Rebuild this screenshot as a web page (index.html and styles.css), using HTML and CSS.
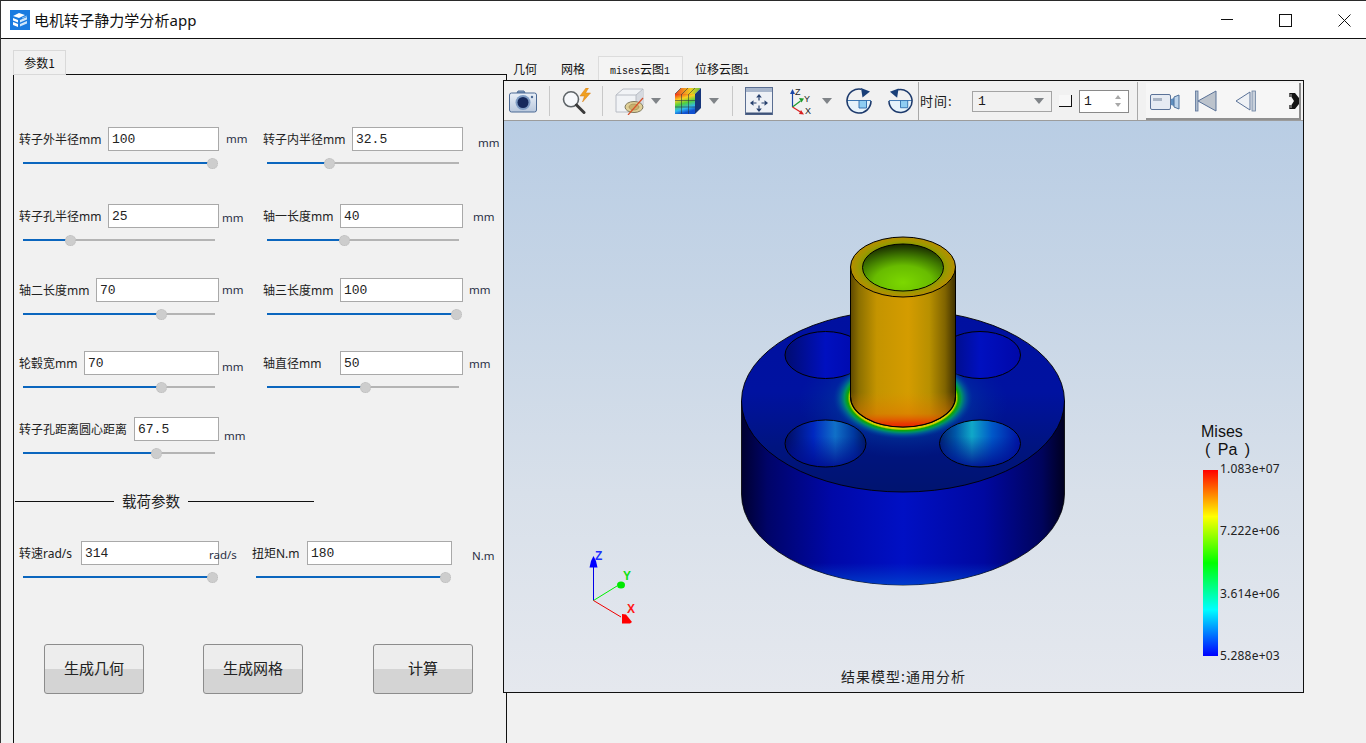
FILE: index.html
```html
<!DOCTYPE html>
<html lang="zh-CN">
<head>
<meta charset="utf-8">
<title>电机转子静力学分析app</title>
<link rel="stylesheet" href="styles.css">
</head>
<body>
<div class="window">
  <header class="titlebar">
    <svg class="logo" width="20" height="20" viewBox="0 0 20 20">
      <rect width="20" height="20" fill="#1a7be0"/>
      <path d="M3 6l6-3 6 2-6 3z M3 8l5 2v2.500l-5-2z M3 12l5 2v3l-5-2z" fill="#fff"/>
      <path d="M10 10l7-3v2.500l-7 3z M10 14l7-3v2.500l-7 3z" fill="#cfe6fb"/>
      <path d="M12 7.500l5-2v1l-5 2z" fill="#8fc4f5"/>
    </svg>
    <span class="app-title">电机转子静力学分析app</span>
    <div class="win-controls">
      <svg width="14" height="14" viewBox="0 0 14 14"><path d="M1 6.500h12" stroke="#111" fill="none"/></svg>
      <svg class="ml-44" width="14" height="14" viewBox="0 0 14 14"><rect x="1.500" y="1.500" width="12" height="12" stroke="#111" fill="none"/></svg>
      <svg class="ml-45" width="14" height="14" viewBox="0 0 14 14"><path d="M1.500 1.500l12 12M13.500 1.500l-12 12" stroke="#111" fill="none"/></svg>
    </div>
  </header>

  <main class="workspace">
    <section class="params">
      <div class="tabstrip"><div class="tab tab-param">参数1</div></div>
      <div class="pane">
        <div class="row">
          <div class="field">
            <div class="line"><div class="entry"><span class="label l-89">转子外半径mm</span><div class="input">100</div></div><span class="unit ux-7">mm</span></div>
            <div class="slider"><i style="width:98.4%"></i><b style="left:98.4%"></b></div>
          </div>
          <div class="field">
            <div class="line"><div class="entry"><span class="label l-89">转子内半径mm</span><div class="input">32.5</div></div><span class="unit ux-15 uy-4">mm</span></div>
            <div class="slider"><i style="width:32.3%"></i><b style="left:32.3%"></b></div>
          </div>
        </div>
        <div class="row gap-35">
          <div class="field">
            <div class="line"><div class="entry"><span class="label l-89">转子孔半径mm</span><div class="input">25</div></div><span class="unit ux-3 uy-2">mm</span></div>
            <div class="slider"><i style="width:24.5%"></i><b style="left:24.5%"></b></div>
          </div>
          <div class="field">
            <div class="line"><div class="entry"><span class="label l-77">轴一长度mm</span><div class="input">40</div></div><span class="unit ux-10 uy-1">mm</span></div>
            <div class="slider"><i style="width:40.1%"></i><b style="left:40.1%"></b></div>
          </div>
        </div>
        <div class="row gap-32">
          <div class="field">
            <div class="line"><div class="entry"><span class="label l-77">轴二长度mm</span><div class="input">70</div></div><span class="unit ux-3">mm</span></div>
            <div class="slider"><i style="width:71.9%"></i><b style="left:71.9%"></b></div>
          </div>
          <div class="field">
            <div class="line"><div class="entry"><span class="label l-77">轴三长度mm</span><div class="input">100</div></div><span class="unit ux-6">mm</span></div>
            <div class="slider"><i style="width:98.4%"></i><b style="left:98.4%"></b></div>
          </div>
        </div>
        <div class="row gap-31">
          <div class="field">
            <div class="line"><div class="entry"><span class="label l-65">轮毂宽mm</span><div class="input">70</div></div><span class="unit ux-3 uy-4">mm</span></div>
            <div class="slider"><i style="width:71.9%"></i><b style="left:71.9%"></b></div>
          </div>
          <div class="field">
            <div class="line"><div class="entry"><span class="label l-77">轴直径mm</span><div class="input">50</div></div><span class="unit ux-6 uy-1">mm</span></div>
            <div class="slider"><i style="width:51%"></i><b style="left:51%"></b></div>
          </div>
        </div>
        <div class="row gap-24">
          <div class="field">
            <div class="line"><div class="entry"><span class="label l-115">转子孔距离圆心距离</span><div class="input">67.5</div></div><span class="unit ux-5 uy-7">mm</span></div>
            <div class="slider"><i style="width:69.3%"></i><b style="left:69.3%"></b></div>
          </div>
        </div>

        <div class="divider"><span class="rule rule-short"></span><span class="divider-text">载荷参数</span><span class="rule"></span></div>

        <div class="row row-load">
          <div class="field">
            <div class="line"><div class="entry"><span class="label l-62">转速rad/s</span><div class="input">314</div></div><span class="unit ux-n10 uy-2">rad/s</span></div>
            <div class="slider"><i style="width:98.4%"></i><b style="left:98.4%"></b></div>
          </div>
          <div class="field">
            <div class="line"><div class="entry"><span class="label l-55">扭矩N.m</span><div class="input">180</div></div><span class="unit ux-20 uy-3">N.m</span></div>
            <div class="slider"><i style="width:98.4%"></i><b style="left:98.4%"></b></div>
          </div>
        </div>

        <div class="actions">
          <button class="btn">生成几何</button>
          <button class="btn ml-59">生成网格</button>
          <button class="btn ml-70">计算</button>
        </div>
      </div>
    </section>

    <section class="results">
      <div class="tabstrip result-tabs">
        <div class="tab">几何</div>
        <div class="tab">网格</div>
        <div class="tab tab-active"><span class="mono">mises</span>云图<span class="mono">1</span></div>
        <div class="tab">位移云图<span class="mono">1</span></div>
      </div>
      <div class="viewer">
        <div class="toolbar">
          <svg class="ml-5" width="28" height="24" viewBox="0 0 28 24">
            <defs><linearGradient id="camBody" x1="0" y1="0" x2="0" y2="1"><stop offset="0" stop-color="#eaf0f8"/><stop offset="1" stop-color="#b9c8dd"/></linearGradient></defs>
            <path d="M8 4l1-2h6l1 2z" fill="#8ea6c6" stroke="#4d6a95"/>
            <rect x=".5" y="4" width="27" height="19" rx="2" fill="url(#camBody)" stroke="#4d6a95"/>
            <circle cx="14" cy="13.500" r="7.500" fill="#7f9cc4"/>
            <circle cx="14" cy="13.500" r="5.500" fill="#16295c"/>
            <circle cx="23" cy="8" r="1.200" fill="#4d6a95"/>
          </svg>
          <span class="sep ml-12"></span>
          <svg class="ml-12" width="29" height="26" viewBox="0 0 29 26">
            <circle cx="9" cy="11.300" r="7.500" fill="#f6f8fb" stroke="#5e6468" stroke-width="1.600"/>
            <path d="M14.500 17l7.500 7.500" stroke="#3a3a3a" stroke-width="3" stroke-linecap="round"/>
            <path d="M24 0l-6 8h4.500l-2 6 8-9h-5l3-5z" fill="#f0a020" stroke="#d67a10" stroke-width=".5"/>
          </svg>
          <span class="sep ml-11"></span>
          <svg class="ml-12" width="29" height="28" viewBox="0 0 29 28">
            <path d="M1 8l7-6h20v16l-7 7H1z" fill="#f1f3f6" stroke="#b8bcc4"/>
            <path d="M21 8l7-6v16l-7 7z" fill="#d6dae0"/>
            <path d="M1 8h20v17M21 8l7-6" fill="none" stroke="#b8bcc4"/>
            <ellipse cx="19" cy="20" rx="9" ry="5.500" fill="#e0d098" stroke="#807a60"/>
            <ellipse cx="19" cy="20" rx="5" ry="3" fill="#c9b06c" stroke="#9a8650" stroke-width=".6"/>
            <path d="M13 28L28 11" stroke="#d8502a" stroke-width="1.200"/>
          </svg>
          <svg class="ml-7" width="10" height="6" viewBox="0 0 10 6"><path d="M0 0h10L5 6z" fill="#808488"/></svg>
          <svg class="ml-13" width="28" height="28" viewBox="0 0 28 28">
            <defs>
              <linearGradient id="cubeFace" x1="0" y1="0" x2=".3" y2="1"><stop offset="0" stop-color="#f02818"/><stop offset=".3" stop-color="#f8d020"/><stop offset=".55" stop-color="#50d040"/><stop offset=".8" stop-color="#30b8f0"/><stop offset="1" stop-color="#1050d0"/></linearGradient>
              <linearGradient id="cubeTop" x1="0" y1="0" x2="1" y2="0"><stop offset="0" stop-color="#f04020"/><stop offset=".6" stop-color="#f0d020"/><stop offset="1" stop-color="#60c040"/></linearGradient>
            </defs>
            <path d="M1 7l6-6h20l-6 6z" fill="url(#cubeTop)"/>
            <path d="M21 7l6-6v20l-6 6z" fill="#16367a"/>
            <rect x="1" y="7" width="20" height="20" fill="url(#cubeFace)"/>
            <path d="M7.500 7v20M14.500 7v20M1 13.500h20M1 20h20M7 1L1 7M14 1L8 7M21 1l-6 6" stroke="#2a3a40" stroke-width=".6" fill="none"/>
          </svg>
          <svg class="ml-7" width="10" height="6" viewBox="0 0 10 6"><path d="M0 0h10L5 6z" fill="#808488"/></svg>
          <span class="sep ml-13"></span>
          <svg class="ml-12" width="28" height="28" viewBox="0 0 28 28">
            <rect x=".5" y=".5" width="27" height="27" fill="#eef1f6" stroke="#5a6e92"/>
            <rect x="1" y="1" width="26" height="4" fill="#a8b6cc"/>
            <path d="M1 26.500h26" stroke="#3e5278" stroke-width="2"/>
            <g fill="#26406e"><path d="M14 7l2.800 3.500h-5.600z"/><path d="M14 25l2.800-3.500h-5.600z"/><path d="M5 16l3.500-2.800v5.600z"/><path d="M23 16l-3.500-2.800v5.600z"/></g>
            <path d="M14 10.500v3M14 18.500v3M8.500 16h3M16.500 16h3" stroke="#26406e" stroke-width="1.200"/>
          </svg>
          <svg class="ml-17" width="23" height="28" viewBox="0 0 23 28">
            <path d="M2.500 20V6" stroke="#1a46a8" stroke-width="1.200"/><path d="M2.500 2L5 7H0z" fill="#1a46a8"/>
            <path d="M2.500 20l8-6" stroke="#1c9a2c" stroke-width="1.200"/><path d="M14 11.500l-5-.5 2.500 4.500z" fill="#1c9a2c"/>
            <path d="M2.500 20l8 5" stroke="#d82020" stroke-width="1.200"/><path d="M14 27.500l-5-.5 2-4z" fill="#d82020"/>
            <text x="5" y="8" class="axis-mini">Z</text><text x="14" y="15" class="axis-mini">Y</text><text x="15" y="27" class="axis-mini">X</text>
          </svg>
          <svg class="ml-9" width="10" height="6" viewBox="0 0 10 6"><path d="M0 0h10L5 6z" fill="#808488"/></svg>
          <svg class="ml-14" width="26" height="26" viewBox="0 0 26 26">
            <path d="M1 12.500h24A12 12 0 0 1 1 12.500z" fill="#e6f3fb"/>
            <path d="M13 12.500h7.500V20H13z" fill="#8fcdf2"/>
            <path d="M1 12.500h24M13 12.500V20h7.500v-7.500" stroke="#2a6aaa" fill="none" stroke-width=".9"/>
            <path d="M25 13A12 12 0 1 1 15.500 1.300" fill="none" stroke="#1d3a6c" stroke-width="1.600"/>
            <path d="M15 0l9 3.500-7.500 6z" fill="#1a3f78"/>
          </svg>
          <svg class="ml-16" width="25" height="26" viewBox="0 0 26 26">
            <path d="M1 12.500h24A12 12 0 0 1 1 12.500z" fill="#e6f3fb"/>
            <path d="M13 12.500h7.500V20H13z" fill="#8fcdf2"/>
            <path d="M1 12.500h24M13 12.500V20h7.500v-7.500" stroke="#2a6aaa" fill="none" stroke-width=".9"/>
            <path d="M1 13A12 12 0 1 0 10.500 1.300" fill="none" stroke="#1d3a6c" stroke-width="1.600"/>
            <path d="M11 0L2 3.500l7.500 6z" fill="#1a3f78"/>
          </svg>
          <span class="sep sep-full ml-5"></span>
          <span class="time-label ml-1">时间:</span>
          <div class="combo ml-14"><span>1</span><svg width="10" height="6" viewBox="0 0 10 6"><path d="M0 0h10L5 6z" fill="#808488"/></svg></div>
          <span class="corner ml-7"></span>
          <div class="spin ml-7"><span>1</span><svg width="8" height="14" viewBox="0 0 8 14"><path d="M1 5l3-4 3 4zM1 9h6l-3 4z" fill="#a8a8a8"/></svg></div>
          <span class="sep sep-full ml-8"></span>
          <div class="player ml-8">
            <svg class="ml-4" width="30" height="20" viewBox="0 0 30 20">
              <rect x=".5" y="3.500" width="20" height="15" rx="1.500" fill="#e6ebf3" stroke="#5a7298"/>
              <rect x="3" y="7" width="9" height="3" fill="#a9b4c4"/>
              <path d="M21 8l3-1v8l-3-1z" fill="#5f8fc0"/>
              <path d="M24 6l5-2v14l-5-2z" fill="#bcd3ea" stroke="#4c6f99"/>
            </svg>
            <svg class="ml-15" width="22" height="22" viewBox="0 0 22 22">
              <path d="M3 11L21 1v20z" fill="#bcc3cc" stroke="#5a7298"/>
              <rect x=".5" y="1" width="2.500" height="20" fill="#aebccc" stroke="#5a7298" stroke-width=".8"/>
            </svg>
            <svg class="ml-18" width="23" height="22" viewBox="0 0 23 22">
              <path d="M1 11L15 2v18z" fill="#eef1f5" stroke="#5a7298"/>
              <rect x="17" y="1" width="3.500" height="20" fill="#c8d0da" stroke="#6a80a0" stroke-width=".8"/>
            </svg>
            <svg class="ml-30" width="12" height="20" viewBox="0 0 12 20">
              <path d="M1 2h6l4 5v6l-4 5H1l5-8z" fill="#141414"/>
              <path d="M1 3h3v3H1zM1 14h3v3H1z" fill="#666"/>
            </svg>
          </div>
        </div>

        <div class="view">
          <svg class="scene" width="798" height="570" viewBox="504 121 798 570">
            <defs>
              <linearGradient id="side" x1="0" y1="0" x2="1" y2="0">
                <stop offset="0" stop-color="#000030"/><stop offset=".08" stop-color="#000468"/><stop offset=".28" stop-color="#0008a8"/><stop offset=".5" stop-color="#0010c4"/><stop offset=".75" stop-color="#0008a0"/><stop offset=".93" stop-color="#00045c"/><stop offset="1" stop-color="#000020"/>
              </linearGradient>
              <linearGradient id="sideEdge" x1="0" y1="0" x2="0" y2="1">
                <stop offset=".88" stop-color="#0040c8" stop-opacity="0"/><stop offset="1" stop-color="#0048d0" stop-opacity=".8"/>
              </linearGradient>
              <linearGradient id="topFace" x1="0" y1="0" x2="0" y2="1">
                <stop offset="0" stop-color="#0010a0"/><stop offset=".45" stop-color="#0012a0"/><stop offset=".75" stop-color="#001480"/><stop offset="1" stop-color="#001470"/>
              </linearGradient>
              <radialGradient id="glow">
                <stop offset=".76" stop-color="#d8d000"/><stop offset=".79" stop-color="#10a800"/><stop offset=".84" stop-color="#009068"/><stop offset=".9" stop-color="#006098" stop-opacity=".75"/><stop offset="1" stop-color="#0030a0" stop-opacity="0"/>
              </radialGradient>
              <radialGradient id="glowWide">
                <stop offset=".45" stop-color="#005aa0" stop-opacity=".55"/><stop offset="1" stop-color="#0030a0" stop-opacity="0"/>
              </radialGradient>
              <linearGradient id="shaft" x1="0" y1="0" x2="1" y2="0">
                <stop offset="0" stop-color="#5e4800"/><stop offset=".08" stop-color="#8c7000"/><stop offset=".25" stop-color="#c49400"/><stop offset=".55" stop-color="#d49c00"/><stop offset=".75" stop-color="#b89000"/><stop offset=".9" stop-color="#806400"/><stop offset="1" stop-color="#3e3000"/>
              </linearGradient>
              <linearGradient id="shaftBase" gradientUnits="userSpaceOnUse" x1="0" y1="392" x2="0" y2="428">
                <stop offset="0" stop-color="#e08000" stop-opacity="0"/><stop offset=".6" stop-color="#e07000" stop-opacity=".5"/><stop offset=".88" stop-color="#e83800"/><stop offset="1" stop-color="#e82000"/>
              </linearGradient>
              <radialGradient id="bore" cx=".5" cy=".82" r=".8">
                <stop offset="0" stop-color="#7cd800"/><stop offset=".45" stop-color="#68bc00"/><stop offset=".72" stop-color="#3f7800"/><stop offset="1" stop-color="#1a2c00"/>
              </radialGradient>
              <radialGradient id="ring">
                <stop offset=".72" stop-color="#7c9c00"/><stop offset=".86" stop-color="#a09800"/><stop offset="1" stop-color="#b88c00"/>
              </radialGradient>
              <linearGradient id="holeBack" x1="0" y1="0" x2="1" y2="0">
                <stop offset="0" stop-color="#000c70"/><stop offset=".5" stop-color="#0010c0"/><stop offset="1" stop-color="#0008a8"/>
              </linearGradient>
              <linearGradient id="holeL" x1="0" y1="0" x2="1" y2="0">
                <stop offset="0" stop-color="#000c60"/><stop offset=".35" stop-color="#0028c0"/><stop offset=".62" stop-color="#1070c8"/><stop offset=".85" stop-color="#0038a0"/><stop offset="1" stop-color="#001860"/>
              </linearGradient>
              <linearGradient id="holeR" x1="0" y1="0" x2="1" y2="0">
                <stop offset="0" stop-color="#002070"/><stop offset=".2" stop-color="#0058a8"/><stop offset=".4" stop-color="#10a8c8"/><stop offset=".65" stop-color="#0058c8"/><stop offset="1" stop-color="#0010a0"/>
              </linearGradient>
              <linearGradient id="holeFade" x1="0" y1="0" x2="0" y2="1">
                <stop offset=".35" stop-color="#000c90" stop-opacity="0"/><stop offset="1" stop-color="#000c90" stop-opacity=".9"/>
              </linearGradient>
              <clipPath id="discTop"><ellipse cx="903" cy="401" rx="161.500" ry="91"/></clipPath>
            </defs>

            <path d="M741.500 401V494A161.500 91 0 0 0 1064.500 494V401Z" fill="url(#side)" stroke="#000" stroke-width=".8"/>
            <path d="M741.500 401V494A161.500 91 0 0 0 1064.500 494V401Z" fill="url(#sideEdge)"/>
            <ellipse cx="903" cy="401" rx="161.500" ry="91" fill="url(#topFace)" stroke="#000" stroke-width=".9"/>
            <ellipse cx="903" cy="402" rx="105" ry="56" fill="url(#glowWide)" clip-path="url(#discTop)"/>

            <ellipse cx="825.500" cy="355" rx="40.500" ry="23.500" fill="url(#holeBack)" stroke="#000"/>
            <ellipse cx="980" cy="355" rx="40.500" ry="23.500" fill="url(#holeBack)" stroke="#000"/>
            <ellipse cx="825.500" cy="443.500" rx="40.500" ry="23.500" fill="url(#holeL)"/>
            <ellipse cx="825.500" cy="443.500" rx="40.500" ry="23.500" fill="url(#holeFade)" stroke="#000"/>
            <ellipse cx="980" cy="443.500" rx="40.500" ry="23.500" fill="url(#holeR)"/>
            <ellipse cx="980" cy="443.500" rx="40.500" ry="23.500" fill="url(#holeFade)" stroke="#000"/>

            <ellipse cx="903" cy="398" rx="70" ry="41" fill="url(#glow)"/>

            <path d="M850.500 267V397A52.500 30 0 0 0 955.500 397V267Z" fill="url(#shaft)" stroke="#000"/>
            <path d="M851 380V397A52 30 0 0 0 955 397V380Z" fill="url(#shaftBase)"/>
            <path d="M850.500 397A52.500 30 0 0 0 955.500 397" fill="none" stroke="#000" stroke-width="1.200"/>
            <ellipse cx="903" cy="267" rx="52.500" ry="30" fill="url(#ring)" stroke="#000"/>
            <ellipse cx="903" cy="267.500" rx="40.500" ry="23.500" fill="url(#bore)" stroke="#000"/>

            <g class="triad">
              <path d="M593.500 600.500V566" stroke="#0000e8" stroke-width="1"/>
              <path d="M593.500 556l2.500 5 1.500 6.500h-8l1.500-6.500z" fill="#0000ff"/>
              <path d="M593.500 600.500L617 586" stroke="#00f000" stroke-width="1"/>
              <ellipse cx="621" cy="585" rx="4" ry="3.500" fill="#00e800"/>
              <path d="M593.500 600.500L621 617" stroke="#f00000" stroke-width="1"/>
              <path d="M622 614l4 .5 6 7.500-2 1.500h-8z" fill="#ff0000"/>
              <text x="595" y="560" fill="#2030ff" class="axis">Z</text>
              <text x="623" y="580" fill="#10e010" class="axis">Y</text>
              <text x="627" y="613" fill="#ff1818" class="axis">X</text>
            </g>
          </svg>

          <div class="legend">
            <div class="legend-title">Mises</div>
            <div class="legend-title legend-unit">( Pa )</div>
            <div class="legend-scale">
              <div class="bar"></div>
              <div class="ticks"><span>1.083e+07</span><span>7.222e+06</span><span>3.614e+06</span><span>5.288e+03</span></div>
            </div>
          </div>
          <div class="caption">结果模型:通用分析</div>
        </div>
      </div>
    </section>
  </main>
</div>
</body>
</html>
```
FILE: styles.css
```css
* { box-sizing: border-box; }
html, body { margin: 0; padding: 0; height: 100%; overflow: hidden; }
body {
  background: #f1f1f1;
  color: #1a1a1a;
  font-family: "Noto Sans", "Noto Sans CJK SC", sans-serif;
  font-size: 12px;
}
.window {
  width: 1366px;
  height: 743px;
  display: flex;
  flex-direction: column;
  overflow: hidden;
  border-top: 1px solid #2a2a2a;
  border-left: 1px solid #333;
}

/* title bar */
.titlebar {
  height: 38px;
  flex: none;
  display: flex;
  align-items: center;
  background: #fff;
  border-bottom: 1px solid #111;
  padding-left: 9px;
}
.logo { flex: none; }
.app-title { margin-left: 4px; font-size: 15px; letter-spacing: .05px; line-height: 20px; color: #111; }
.win-controls { margin-left: auto; display: flex; align-items: center; padding-right: 15px; }

/* margins used for canvas-like Qt placements */
.ml-1 { margin-left: 1px; }
.ml-4 { margin-left: 4px; }
.ml-5 { margin-left: 5px; }
.ml-7 { margin-left: 7px; }
.ml-8 { margin-left: 8px; }
.ml-9 { margin-left: 9px; }
.ml-11 { margin-left: 11px; }
.ml-12 { margin-left: 12px; }
.ml-13 { margin-left: 13px; }
.ml-14 { margin-left: 14px; }
.ml-15 { margin-left: 15px; }
.ml-16 { margin-left: 16px; }
.ml-17 { margin-left: 17px; }
.ml-18 { margin-left: 18px; }
.ml-30 { margin-left: 30px; }
.ml-44 { margin-left: 44px; }
.ml-45 { margin-left: 45px; }
.ml-59 { margin-left: 59px; }
.ml-70 { margin-left: 70px; }

.workspace { flex: 1; display: flex; min-height: 0; }

/* tabs */
.tabstrip { display: flex; flex: none; }
.tab { font-family: "Noto Sans CJK SC", sans-serif; font-size: 12px; color: #111; white-space: nowrap; }
.mono { font-family: "Liberation Mono", monospace; font-size: 10px; }

/* parameters panel */
.params {
  width: 494px;
  margin-left: 12px;
  margin-top: 11px;
  flex: none;
  display: flex;
  flex-direction: column;
}
.tab-param {
  position: relative;
  z-index: 1;
  width: 53px;
  height: 25px;
  margin-bottom: -1px;
  line-height: 23px;
  text-align: center;
  background: #f1f1f1;
  border: 1px solid #d9d9d9;
}
.pane {
  flex: 1;
  border: 1px solid #111;
  border-bottom: 0;
  padding: 52px 0 0 5px;
}
.row { display: grid; grid-template-columns: 244px 1fr; }
.row-load { grid-template-columns: 233px 1fr; margin-top: 30px; }
.gap-35 { margin-top: 35px; }
.gap-32 { margin-top: 32px; }
.gap-31 { margin-top: 31px; }
.gap-24 { margin-top: 24px; }

.line { display: flex; align-items: flex-start; height: 24px; }
.entry { width: 200px; flex: none; display: flex; align-items: center; height: 24px; }
.label {
  flex: none;
  margin-top: 2px;
  font-family: "Noto Sans", "Noto Sans CJK SC", sans-serif;
  font-size: 12px;
  line-height: 16px;
  white-space: nowrap;
  color: #222;
}
.l-55 { width: 55px; }
.l-62 { width: 62px; }
.l-65 { width: 65px; }
.l-77 { width: 77px; }
.l-89 { width: 89px; }
.l-115 { width: 115px; }
.input {
  flex: 1;
  height: 24px;
  background: #fff;
  border: 1px solid #a9a9a9;
  padding: 1px 0 0 3px;
  font-family: "Liberation Mono", monospace;
  font-size: 13px;
  line-height: 22px;
  color: #222;
}
.unit { flex: none; line-height: 24px; font-size: 11.500px; color: #2a2f45; }
.ux-3 { margin-left: 3px; }
.ux-5 { margin-left: 5px; }
.ux-6 { margin-left: 6px; }
.ux-7 { margin-left: 7px; }
.ux-10 { margin-left: 10px; }
.ux-15 { margin-left: 15px; }
.ux-20 { margin-left: 20px; }
.ux-n10 { margin-left: -10px; }
.uy-1 { margin-top: 1px; }
.uy-2 { margin-top: 2px; }
.uy-3 { margin-top: 3px; }
.uy-4 { margin-top: 4px; }
.uy-7 { margin-top: 7px; }

.slider {
  position: relative;
  width: 192px;
  height: 12px;
  margin: 6px 0 0 4px;
  background: linear-gradient(#b4b4b4, #b4b4b4) center / 100% 2px no-repeat;
}
.slider i {
  position: absolute;
  left: 0;
  top: 5px;
  height: 2px;
  background: #0b66be;
}
.slider b {
  position: absolute;
  top: 1px;
  width: 11px;
  height: 11px;
  margin-left: -5px;
  border-radius: 50%;
  background: #cdcdcd;
  border: 1px dotted #bbb;
}

.divider {
  display: flex;
  align-items: center;
  width: 299px;
  height: 20px;
  margin: 32px 0 0 -4px;
}
.rule { flex: 1; height: 1px; background: #111; }
.rule-short { flex: none; width: 99px; }
.divider-text { margin: 0 8px; font-family: "Noto Sans CJK SC", sans-serif; font-size: 14.500px; line-height: 20px; color: #222; white-space: nowrap; }

.actions { display: flex; margin: 61px 0 0 25px; }
.btn {
  width: 100px;
  height: 50px;
  padding: 0 0 3px;
  border: 1px solid #8c8c8c;
  border-radius: 3px;
  background: linear-gradient(#ededed 0, #ededed 51%, #d4d4d4 51%, #d4d4d4 100%);
  font-family: "Noto Sans CJK SC", sans-serif;
  font-size: 15px;
  color: #222;
}

/* results */
.results {
  position: relative;
  z-index: 2;
  margin-left: -4px;
  margin-top: 17px;
  display: flex;
  flex-direction: column;
  flex: none;
}
.result-tabs { height: 24px; margin-left: -2px; }
.result-tabs .tab { padding: 0 12px; line-height: 26px; height: 24px; }
.result-tabs .tab-active {
  width: 85px;
  margin-left: 1px;
  padding: 0 11px;
  background: #f4f4f4;
  border: 1px solid #dcdcdc;
  border-bottom: 0;
  line-height: 24px;
  height: 24px;
}
.viewer {
  width: 801px;
  height: 613px;
  border: 1px solid #111;
  background: #f1f1f1;
  display: flex;
  flex-direction: column;
}

.toolbar {
  height: 40px;
  flex: none;
  display: flex;
  align-items: center;
  background: #f1f1f1;
  border-bottom: 1px solid #9c9c9c;
}
.toolbar > svg, .player > svg { flex: none; }
.sep { flex: none; width: 1px; height: 30px; background: #c8c8c8; }
.sep-full { height: 38px; background: #a8a8a8; }
.time-label {
  flex: none;
  width: 38px;
  font-family: "Noto Sans CJK SC", sans-serif;
  font-size: 13px;
  letter-spacing: 1px;
  white-space: nowrap;
}
.combo {
  flex: none;
  width: 80px;
  height: 21px;
  margin-top: 1px;
  display: flex;
  align-items: center;
  justify-content: space-between;
  padding: 0 7px 0 5px;
  border: 1px solid #a4a4a4;
  font-family: "Liberation Mono", monospace;
  font-size: 13px;
}
.corner {
  flex: none;
  width: 13px;
  height: 12px;
  margin-top: 1px;
  border-right: 1px solid #111;
  border-bottom: 1px solid #111;
  background: #f7f7f7;
}
.spin {
  flex: none;
  width: 50px;
  height: 23px;
  margin-top: 1px;
  display: flex;
  align-items: center;
  justify-content: space-between;
  padding: 0 6px 0 4px;
  background: #fff;
  border: 1px solid #8a8a8a;
  font-family: "Liberation Mono", monospace;
  font-size: 13px;
}
.player {
  flex: none;
  height: 37px;
  width: 155px;
  display: flex;
  align-items: center;
  align-self: flex-start;
  margin-top: 2px;
  background: #f6f6f6;
  border-bottom: 2px solid #909090;
  border-right: 2px solid #8c8c8c;
  overflow: hidden;
}
.axis-mini { font-family: "Liberation Sans", sans-serif; font-size: 9px; fill: #222; }

.view {
  position: relative;
  flex: 1;
  overflow: hidden;
  background: linear-gradient(#b9cde4 0%, #c6d5e6 30%, #d8e0ea 65%, #e5e8ee 100%);
}
.scene { display: block; }
.axis { font-family: "Liberation Sans", sans-serif; font-size: 12px; font-weight: 700; }

.legend {
  position: absolute;
  left: 697px;
  top: 302px;
  width: 90px;
}
.legend-title {
  font-family: "Liberation Sans", sans-serif;
  font-size: 16px;
  line-height: 18px;
  color: #111;
}
.legend-unit { margin-left: 4px; word-spacing: 3px; }
.legend-scale {
  display: flex;
  margin: 11px 0 0 2px;
  height: 186px;
}
.bar {
  flex: none;
  width: 15px;
  height: 186px;
  background: linear-gradient(#ff0000, #ffff00 25%, #00ff00 50%, #00ffff 75%, #0000ff);
}
.ticks {
  display: flex;
  flex-direction: column;
  justify-content: space-between;
  height: 201px;
  margin: -8px 0 0 2px;
  font-size: 12px;
  line-height: 14px;
  color: #222;
  letter-spacing: .2px;
}
.caption {
  position: absolute;
  left: 337px;
  bottom: 6px;
  font-family: "Noto Sans CJK SC", sans-serif;
  font-size: 14px;
  line-height: 20px;
  letter-spacing: 1px;
  color: #222;
  white-space: nowrap;
}
```
